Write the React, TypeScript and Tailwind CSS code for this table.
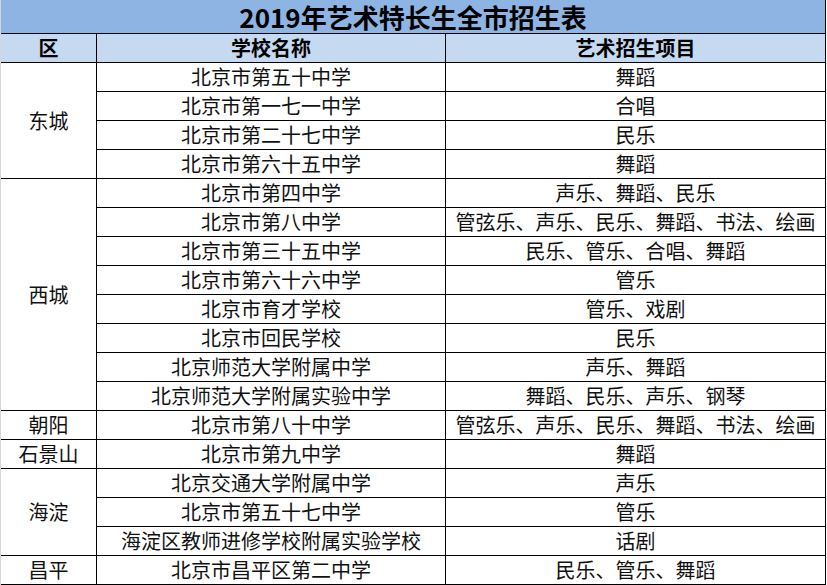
import React from "react";

type Group = { d: string; rows: [string, string][] };

const groups: Group[] = [
  {
    d: "东城",
    rows: [
      ["北京市第五十中学", "舞蹈"],
      ["北京市第一七一中学", "合唱"],
      ["北京市第二十七中学", "民乐"],
      ["北京市第六十五中学", "舞蹈"],
    ],
  },
  {
    d: "西城",
    rows: [
      ["北京市第四中学", "声乐、舞蹈、民乐"],
      ["北京市第八中学", "管弦乐、声乐、民乐、舞蹈、书法、绘画"],
      ["北京市第三十五中学", "民乐、管乐、合唱、舞蹈"],
      ["北京市第六十六中学", "管乐"],
      ["北京市育才学校", "管乐、戏剧"],
      ["北京市回民学校", "民乐"],
      ["北京师范大学附属中学", "声乐、舞蹈"],
      ["北京师范大学附属实验中学", "舞蹈、民乐、声乐、钢琴"],
    ],
  },
  { d: "朝阳", rows: [["北京市第八十中学", "管弦乐、声乐、民乐、舞蹈、书法、绘画"]] },
  { d: "石景山", rows: [["北京市第九中学", "舞蹈"]] },
  {
    d: "海淀",
    rows: [
      ["北京交通大学附属中学", "声乐"],
      ["北京市第五十七中学", "管乐"],
      ["海淀区教师进修学校附属实验学校", "话剧"],
    ],
  },
  { d: "昌平", rows: [["北京市昌平区第二中学", "民乐、管乐、舞蹈"]] },
];

const spanClass: Record<number, string> = {
  1: "row-span-1",
  3: "row-span-3",
  4: "row-span-4",
  8: "row-span-8",
};

const cell = "bg-white flex items-center justify-center text-[20px] leading-[26px] text-[#111] whitespace-nowrap";
const head = "bg-[#c5d9f1] flex items-center justify-center text-[20px] font-bold text-black leading-[26px]";

export default function App() {
  let rowStart = 3;
  return (
    <div
      className="w-[827px] h-[585px] bg-white"
      style={{ fontFamily: '"Noto Sans CJK SC", "Microsoft YaHei", sans-serif' }}
    >
      <div className="w-[826px] grid grid-cols-[95px_348px_379px] grid-rows-[33px_28px_repeat(18,28px)] gap-px bg-black border-l border-[#d6d6d6] pr-px pb-px">
        <div className="col-span-3 bg-[#8db4e2] flex items-center justify-center text-[26px] font-bold text-black leading-[32px] pt-px">
          2019年艺术特长生全市招生表
        </div>
        <div className={head}>区</div>
        <div className={head}>学校名称</div>
        <div className={head}>艺术招生项目</div>
        {groups.map((g) => {
          const start = rowStart;
          rowStart += g.rows.length;
          return (
            <React.Fragment key={g.d}>
              <div
                className={`${cell} col-start-1 ${spanClass[g.rows.length]}`}
                style={{ gridRowStart: start }}
              >
                {g.d}
              </div>
              {g.rows.map(([s, a], i) => (
                <React.Fragment key={s}>
                  <div className={`${cell} col-start-2`} style={{ gridRowStart: start + i }}>
                    {s}
                  </div>
                  <div className={`${cell} col-start-3`} style={{ gridRowStart: start + i }}>
                    {a}
                  </div>
                </React.Fragment>
              ))}
            </React.Fragment>
          );
        })}
      </div>
    </div>
  );
}
